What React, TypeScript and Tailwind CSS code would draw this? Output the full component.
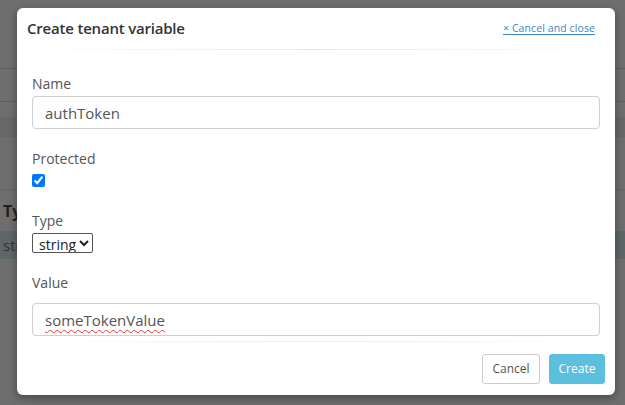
import { useState } from 'react';

const font = { fontFamily: '"Open Sans", "Noto Sans", sans-serif' };

// the page behind the overlay; only a 17px strip of it shows
const BackgroundPage = () => (
  <div className="h-[405px] w-full bg-[#6e6e6e] overflow-hidden">
    <div className="h-[68px]" />
    <div className="h-px bg-[#5e5e5e]" />
    <div className="h-[32px]" />
    <div className="h-px bg-[#5e5e5e]" />
    <div className="h-[15px]" />
    <div className="h-[20px] bg-[#686868]" />
    <div className="h-[52px]" />
    <div className="h-px bg-[#646464]" />
    <div className="h-[41px] flex items-center pl-[3px]">
      <span className="w-[14px] overflow-hidden whitespace-nowrap text-[16px] font-bold text-[#222]">Type</span>
    </div>
    <div className="h-[28px] flex items-center pl-[3px] bg-[#5d6767]">
      <span className="w-[14px] overflow-hidden whitespace-nowrap text-[15px] text-[#333]">string</span>
    </div>
  </div>
);

const Field = ({ label, className, children }: { label: string; className?: string; children: React.ReactNode }) => (
  <div className={`flex flex-col ${className ?? ''}`}>
    <label className="text-[14px] leading-[20px] text-[#555]">{label}</label>
    {children}
  </div>
);

export default function App() {
  const [name, setName] = useState('authToken');
  const [value, setValue] = useState('someTokenValue');
  const [isProtected, setProtected] = useState(true);
  const [type, setType] = useState('string');

  return (
    <div className="relative w-[625px] h-[405px] overflow-hidden" style={font}>
      <BackgroundPage />
      <div className="absolute inset-0 pl-[17px] pr-[10px] pt-[8px]">
        <div className="bg-white rounded-[6px] shadow-[0_3px_10px_rgba(0,0,0,0.35)] h-[387px] flex flex-col">
          <div className="h-[41px] flex items-center justify-between pl-[10px] pr-[20px]">
            <h2 className="text-[15px] font-semibold text-[#333] tracking-[-0.2px]">Create tenant variable</h2>
            <a href="#" className="text-[10.5px] text-[#3b87c6] underline underline-offset-2 tracking-[0.1px]">× Cancel and close</a>
          </div>
          <div className="h-px bg-linear-to-r from-transparent via-[#e8e8e8] to-transparent" />

          <div className="flex-1 flex flex-col px-[15px] pt-[24px]">
            <Field label="Name">
              <input
                value={name}
                onChange={(e) => setName(e.target.value)}
                className="mt-[2px] h-[33px] border border-[#cfcfcf] rounded-[4px] px-[12px] text-[15px] text-[#555] outline-none"
              />
            </Field>

            <Field label="Protected" className="mt-[20px]">
              <div className="mt-[5px] flex">
                <input
                  type="checkbox"
                  checked={isProtected}
                  onChange={(e) => setProtected(e.target.checked)}
                  className="w-[13px] h-[13px] accent-[#0075ff]"
                />
              </div>
            </Field>

            <Field label="Type" className="mt-[24px]">
              <div className="mt-[2px] flex">
                <select
                  value={type}
                  onChange={(e) => setType(e.target.value)}
                  className="h-[20px] w-[61px] border border-[#555] rounded-[2px] text-[14px] leading-[18px] text-[#222] pl-[2px] bg-white"
                  style={{ appearance: 'auto' }}
                >
                  <option value="string">string</option>
                  <option value="number">number</option>
                </select>
              </div>
            </Field>

            <Field label="Value" className="mt-[20px]">
              <div className="relative mt-[10px]">
                <input
                  value={value}
                  onChange={(e) => setValue(e.target.value)}
                  spellCheck
                  className="w-full h-[33px] border border-[#cfcfcf] rounded-[4px] px-[12px] text-[15px] text-[#555] outline-none"
                />
                {/* spellcheck squiggle */}
                <span
                  aria-hidden
                  className="pointer-events-none absolute left-[13px] top-0 h-[33px] flex items-center text-[15px] text-transparent underline decoration-wavy decoration-[#e53935] decoration-[1px] underline-offset-[4px]"
                >
                  {value}
                </span>
              </div>
            </Field>
          </div>

          <div className="h-px bg-linear-to-r from-transparent via-[#ececec] to-transparent" />
          <div className="h-[53px] flex items-center justify-end gap-[9px] pr-[10px]">
            <button className="h-[30px] w-[58px] border border-[#cccccc] rounded-[3px] text-[12px] text-[#555] bg-white">Cancel</button>
            <button className="h-[30px] w-[56px] border border-[#5bc0de] rounded-[3px] text-[12px] text-white bg-[#5bc0de]">Create</button>
          </div>
        </div>
      </div>
    </div>
  );
}
